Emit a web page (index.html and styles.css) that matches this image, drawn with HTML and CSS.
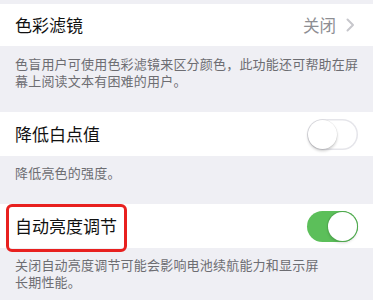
FILE: index.html
```html
<!DOCTYPE html>
<html lang="zh-CN">
<head>
<meta charset="utf-8">
<link rel="stylesheet" href="styles.css">
</head>
<body>
<div class="page">
  <div class="row row-first">
    <span class="title">色彩滤镜</span>
    <span class="value">关闭<svg class="chev" width="9" height="14" viewBox="0 0 9 14"><path d="M1.5 1.5 L7 7 L1.5 12.5" fill="none" stroke="#c7c7cc" stroke-width="2" stroke-linecap="round" stroke-linejoin="round"/></svg></span>
  </div>
  <div class="foot foot-first">色盲用户可使用色彩滤镜来区分颜色，此功能还可帮助在屏幕上阅读文本有困难的用户。</div>
  <div class="row">
    <span class="title">降低白点值</span>
    <span class="toggle"><span class="knob"></span></span>
  </div>
  <div class="foot foot-second">降低亮色的强度。</div>
  <div class="row row-marked">
    <span class="title">自动亮度调节</span>
    <span class="toggle on"><span class="knob"></span></span>
    <span class="mark"></span>
  </div>
  <div class="foot foot-third">关闭自动亮度调节可能会影响电池续航能力和显示屏<br>长期性能。</div>
</div>
</body>
</html>
```
FILE: styles.css
```css
html, body {
  margin: 0;
  padding: 0;
  background: #efeff4;
}
body {
  font-family: "Noto Sans CJK SC", "Noto Sans", sans-serif;
  width: 373px;
  height: 300px;
  overflow: hidden;
}
.page {
  padding-top: 4px;
}
.row {
  position: relative;
  display: flex;
  align-items: center;
  justify-content: space-between;
  height: 44px;
  padding: 0 15px;
  background: #fff;
  box-sizing: border-box;
}
.row-first {
  height: 42px;
}
.title {
  font-size: 17px;
  color: #111;
  line-height: 20px;
}
.value {
  display: flex;
  align-items: center;
  font-size: 16.5px;
  color: #8e8e93;
  line-height: 20px;
}
.chev {
  margin-left: 10px;
  margin-right: 3px;
}
.foot {
  font-size: 13px;
  letter-spacing: 0.2px;
  line-height: 17px;
  color: #6d6d72;
  padding: 8px 8px 0 15px;
  box-sizing: content-box;
}
.foot-first {
  padding-top: 9px;
  height: 57px;
}
.foot-second {
  padding-top: 8px;
  height: 40px;
}
.toggle {
  position: relative;
  width: 51px;
  height: 31px;
  border-radius: 16px;
  background: #fff;
  box-shadow: inset 0 0 0 1.5px #e5e5ea;
  box-sizing: border-box;
}
.toggle .knob {
  position: absolute;
  top: 1px;
  left: 1px;
  width: 29px;
  height: 29px;
  border-radius: 50%;
  background: #fff;
  box-shadow: 0 2px 3px rgba(0,0,0,0.2), 0 0 0 0.5px rgba(0,0,0,0.08);
}
.toggle.on {
  background: #5cbf5a;
  box-shadow: none;
}
.toggle.on .knob {
  left: 21px;
  box-shadow: 0 0 0 1px #4fa84e, 0 2px 3px rgba(0,0,0,0.15);
}
.mark {
  position: absolute;
  left: 6px;
  top: 0;
  width: 121px;
  height: 48px;
  border: 3px solid #e8201f;
  border-radius: 6px;
  box-sizing: border-box;
}
```
